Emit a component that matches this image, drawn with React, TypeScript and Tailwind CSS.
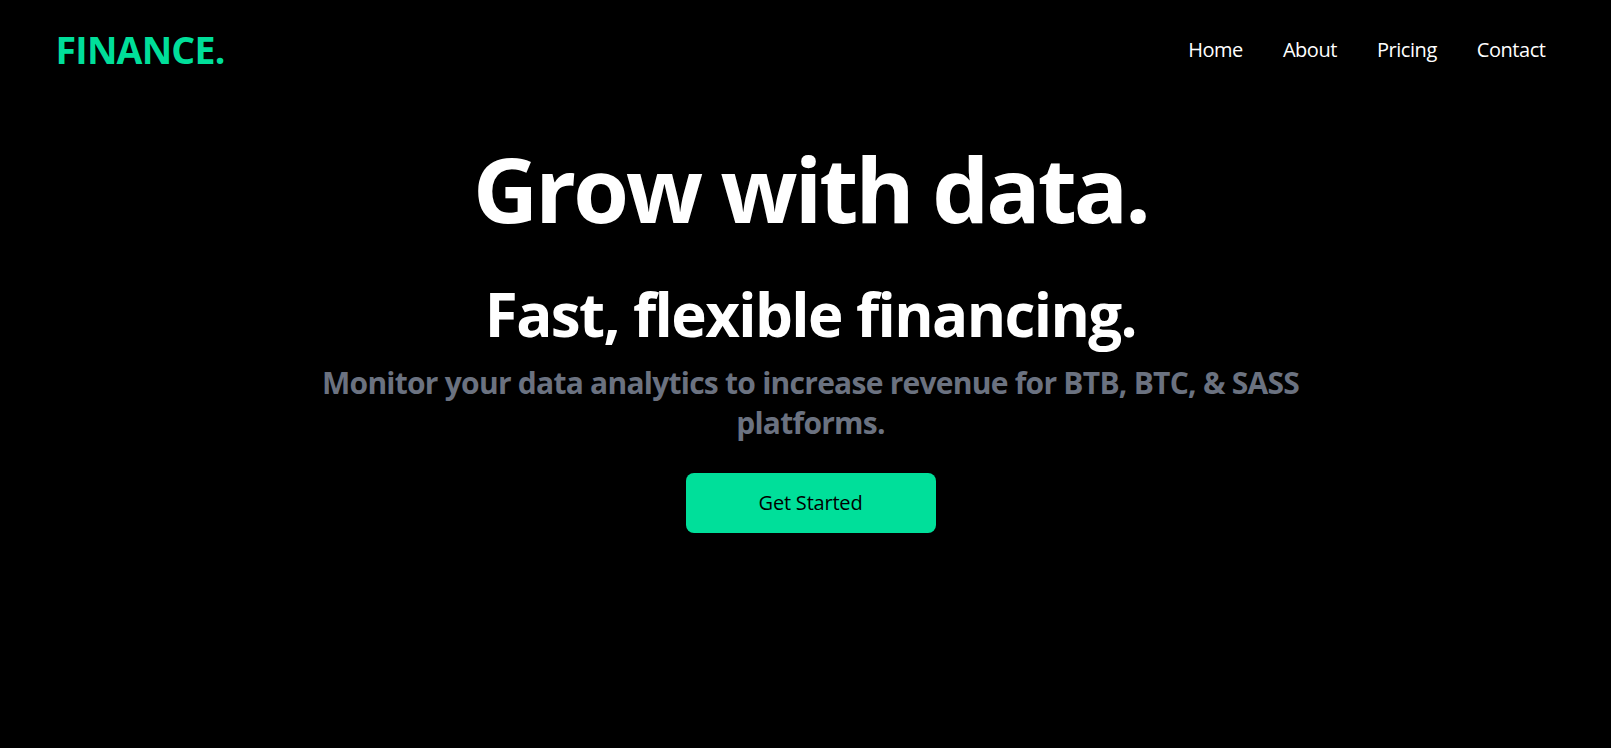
import React from "react";

const navLinks = ["Home", "About", "Pricing", "Contact"];

export default function App() {
  return (
    <div className="bg-white min-h-[755px] font-['Open_Sans',sans-serif]">
      {/* black page area, white strip shows underneath */}
      <div className="bg-black h-[748px] pl-[10px] text-white">
        {/* Navbar */}
        <header className="max-w-[1550px] mx-auto h-[100px] flex items-center justify-between px-5">
          <h1 className="text-[37.5px] leading-none font-bold text-[#00df9a] tracking-[-0.8px]">
            FINANCE.
          </h1>
          <ul className="flex items-center">
            {navLinks.map((link) => (
              <li key={link} className="p-5 text-[20px] leading-none tracking-[-0.45px]">
                {link}
              </li>
            ))}
          </ul>
        </header>

        {/* Hero */}
        <section className="max-w-[1000px] mx-auto flex flex-col text-center">
          <h1 className="mt-[43px] text-[90px] leading-none font-bold tracking-[-2.9px]">
            Grow with data.
          </h1>
          <h2 className="mt-[51px] text-[60px] leading-none font-bold tracking-[-1.6px]">
            Fast, flexible financing.
          </h2>
          <p className="mt-[19px] text-[30px] leading-[40px] font-bold text-[#6b7280] tracking-[-0.75px]">
            Monitor your data analytics to increase revenue for BTB, BTC, &amp; SASS platforms.
          </p>
          <button className="mt-[30px] mx-auto w-[250px] h-[60px] rounded-[8px] bg-[#00df9a] text-black text-[20px] font-medium tracking-[-0.2px]">
            Get Started
          </button>
        </section>
      </div>
    </div>
  );
}
